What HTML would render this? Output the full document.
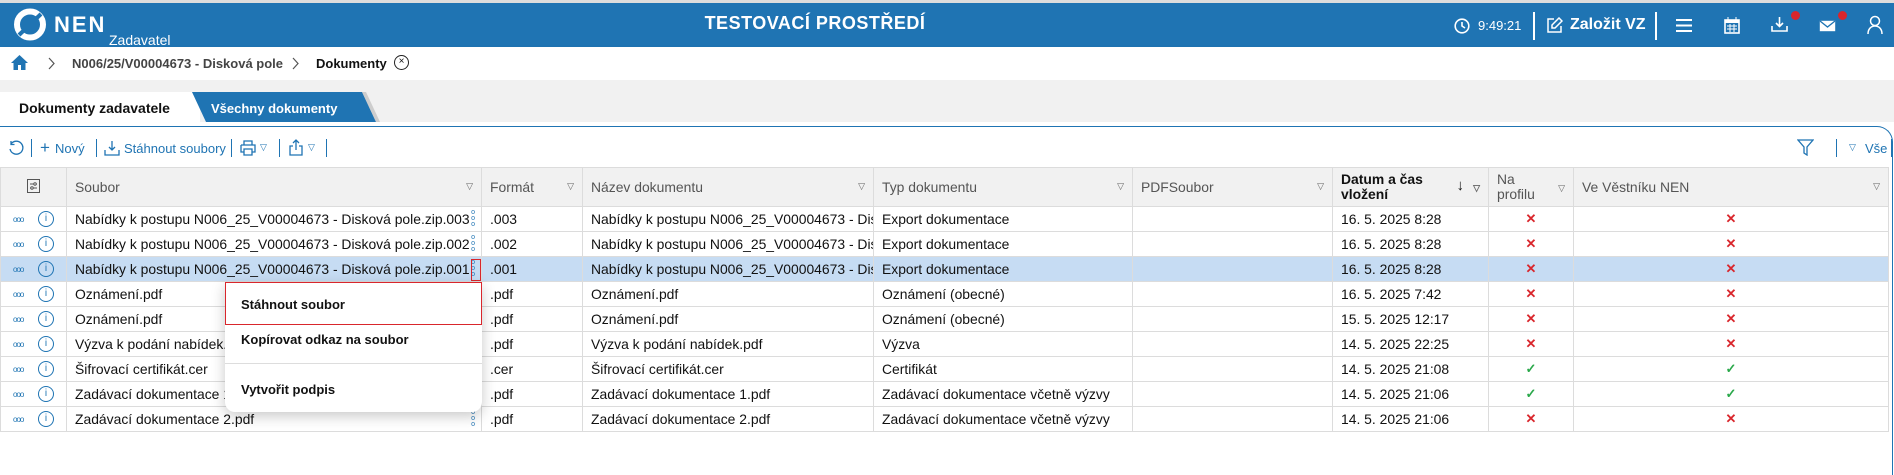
<!DOCTYPE html>
<html><head><meta charset="utf-8"><style>
*{box-sizing:border-box;margin:0;padding:0}
body{width:1894px;height:475px;overflow:hidden;background:#fff;font-family:"Liberation Sans",Arial,sans-serif;font-size:13px;color:#111;position:relative}
.a{position:absolute}
#top{left:0;top:0;width:1894px;height:3px;background:#ddd}
#hdr{left:0;top:3px;width:1894px;height:44px;background:#1f74b3;color:#fff}
#bc{left:0;top:47px;width:1894px;height:33px;background:#fff;box-shadow:0 3px 5px rgba(0,0,0,.12)}
#grey{left:0;top:80px;width:1894px;height:42px;background:#f1f1f1}
#panel{left:0;top:126px;width:1893px;height:349px;border-top:1.5px solid #1f74b3;border-right:1.5px solid #1f74b3;border-top-right-radius:16px;background:#fff}
table{position:absolute;left:0;top:167px;border-collapse:collapse;table-layout:fixed;width:1888px}
td,th{border:1px solid #dcdcdc;height:25px;padding:0 8px;white-space:nowrap;overflow:hidden;font-weight:normal;text-align:left;position:relative;font-size:13.9px}
th{height:39px;background:#f1f1f1;color:#555;vertical-align:middle}
th .f{position:absolute;right:8px;top:13px;font-size:9px;color:#666}
tr.sel td{background:#c6dcf3}
.x{color:#d9262c;font-weight:bold;text-align:center;font-size:13px}
.ok{color:#2aa84a;font-weight:bold;text-align:center;font-size:13px}
.blue{color:#1f74b3}
.sep{position:absolute;width:1px;height:18px;background:#1f74b3;top:139px}
.ic{position:absolute;left:12px;top:8px;color:#1f74b3;font-size:8px;letter-spacing:-1px}
.in{position:absolute;left:37px;top:4px;width:16px;height:16px;border:1.3px solid #1f74b3;border-radius:50%;color:#1f74b3;font-size:10px;line-height:13px;text-align:center}
.kb{position:absolute;right:6px;top:3px;color:#1f74b3;font-size:7px;line-height:6px}
</style></head><body>
<div class="a" id="top"></div>
<div class="a" id="hdr">
 <svg class="a" style="left:13px;top:5px" width="34" height="33" viewBox="0 0 34 33"><circle cx="17" cy="16.5" r="13" fill="none" stroke="#fff" stroke-width="6"/><path d="M6 27 L28 6" stroke="#1f74b3" stroke-width="4"/></svg>
 <div class="a" style="left:54px;top:9px;font-size:22px;font-weight:bold;letter-spacing:2px">NEN</div>
 <div class="a" style="left:109px;top:29px;font-size:14px">Zadavatel</div>
 <div class="a" style="left:0;width:1630px;text-align:center;top:10px;font-size:18px;font-weight:bold;letter-spacing:.5px">TESTOVACÍ PROSTŘEDÍ</div>
 <svg class="a" style="left:1454px;top:15px" width="16" height="16" viewBox="0 0 16 16" fill="none" stroke="#fff" stroke-width="1.6"><circle cx="8" cy="8" r="6.8"/><path d="M8 4v4l3 2"/></svg>
 <div class="a" style="left:1478px;top:15px;font-size:13px">9:49:21</div>
 <div class="a" style="left:1533px;top:9px;width:2px;height:28px;background:#fff"></div>
 <svg class="a" style="left:1546px;top:14px" width="17" height="17" viewBox="0 0 17 17" fill="none" stroke="#fff" stroke-width="1.5"><path d="M8 2H2v13h13V9"/><path d="M13 1l3 3-7 7H6V8z"/></svg>
 <div class="a" style="left:1570px;top:13px;font-size:16px;font-weight:bold">Založit VZ</div>
 <div class="a" style="left:1655px;top:9px;width:2px;height:28px;background:#fff"></div>
 <svg class="a" style="left:1676px;top:16px" width="16" height="13"><path d="M0 1h16M0 6.5h16M0 12h16" stroke="#fff" stroke-width="2"/></svg>
 <svg class="a" style="left:1724px;top:14px" width="16" height="17" viewBox="0 0 16 17"><rect x="1" y="3" width="14" height="13" fill="none" stroke="#fff" stroke-width="1.6"/><rect x="1" y="3" width="14" height="3" fill="#fff"/><path d="M4 0v4M12 0v4M3 9h10M3 12h10M6 7v8M10 7v8" stroke="#fff" stroke-width="1"/></svg>
 <svg class="a" style="left:1771px;top:13px" width="17" height="17" viewBox="0 0 17 17" fill="none" stroke="#fff" stroke-width="1.6"><path d="M8.5 1v9M5 7l3.5 3.5L12 7M1 10v5h15v-5"/></svg>
 <div class="a" style="left:1791px;top:8px;width:9px;height:9px;border-radius:50%;background:#d9262c"></div>
 <svg class="a" style="left:1819px;top:17px" width="17" height="12"><rect x=".8" y=".8" width="15.4" height="10.4" fill="#fff"/><path d="M1 1l7.5 6L16 1" stroke="#1f74b3" stroke-width="1.3" fill="none"/></svg>
 <div class="a" style="left:1838px;top:8px;width:9px;height:9px;border-radius:50%;background:#d9262c"></div>
 <svg class="a" style="left:1867px;top:12px" width="16" height="20" viewBox="0 0 16 20" fill="none" stroke="#fff" stroke-width="1.5"><circle cx="8" cy="6" r="4.5"/><path d="M1 19c0-5 3-8 7-8s7 3 7 8"/></svg>
</div>
<div class="a" id="bc">
 <svg class="a" style="left:11px;top:8px" width="17" height="15" viewBox="0 0 17 15"><path d="M8.5 0L0 8h2.5v7h4.5v-5h3v5h4.5V8H17z" fill="#1f74b3"/></svg>
 <svg class="a" style="left:48px;top:10px" width="8" height="13"><path d="M1 1l5 5.5L1 12" stroke="#555" fill="none" stroke-width="1.2"/></svg>
 <div class="a" style="left:72px;top:9px;font-weight:bold;color:#444;font-size:13px">N006/25/V00004673 - Disková pole</div>
 <svg class="a" style="left:292px;top:10px" width="8" height="13"><path d="M1 1l5 5.5L1 12" stroke="#555" fill="none" stroke-width="1.2"/></svg>
 <div class="a" style="left:316px;top:9px;font-weight:bold;font-size:13px">Dokumenty</div>
 <div class="a" style="left:394px;top:8px;width:15px;height:15px;border:1.3px solid #222;border-radius:50%;font-size:10px;line-height:12px;text-align:center">×</div>
</div>
<div class="a" id="grey"></div>
<div class="a" style="left:0;top:92px;width:200px;height:34px;background:#fff"></div>
<div class="a" style="left:19px;top:100px;font-weight:bold;font-size:14px">Dokumenty zadavatele</div>
<svg class="a" style="left:190px;top:92px" width="190" height="30"><polygon points="2,0 172,0 186,30 16,30" fill="#1f74b3"/><polygon points="172,0 176,0 190,30 186,30" fill="#aaa" opacity=".5"/></svg>
<div class="a" style="left:211px;top:101px;font-weight:bold;font-size:13px;color:#fff">Všechny dokumenty</div>
<div class="a" id="panel"></div>
<svg class="a" style="left:8px;top:140px" width="16" height="16" viewBox="0 0 16 16" fill="none" stroke="#1f74b3" stroke-width="1.3"><path d="M3 4A6.5 6.5 0 1 1 2 9"/><path d="M3 1v3.5h3.5"/></svg>
<div class="sep" style="left:31px"></div>
<div class="a blue" style="left:40px;top:139px;font-size:17px;line-height:17px">+</div>
<div class="a blue" style="left:55px;top:141px">Nový</div>
<div class="sep" style="left:96px"></div>
<svg class="a" style="left:104px;top:140px" width="16" height="16" viewBox="0 0 16 16" fill="none" stroke="#1f74b3" stroke-width="1.3"><path d="M8 1v9M5 7l3 3 3-3M1 10v5h14v-5"/></svg>
<div class="a blue" style="left:124px;top:141px">Stáhnout soubory</div>
<div class="sep" style="left:231px"></div>
<svg class="a" style="left:240px;top:140px" width="16" height="16" viewBox="0 0 16 16" fill="none" stroke="#1f74b3" stroke-width="1.3"><path d="M4 5V1h8v4M1 5h14v7h-3M4 12H1V5M4 9h8v6H4z"/></svg>
<div class="a blue" style="left:260px;top:142px;font-size:9px">▽</div>
<div class="sep" style="left:279px"></div>
<svg class="a" style="left:289px;top:139px" width="14" height="17" viewBox="0 0 14 17" fill="none" stroke="#1f74b3" stroke-width="1.3"><path d="M7 11V1M4 4l3-3 3 3M4 7H1v9h12V7h-3"/></svg>
<div class="a blue" style="left:308px;top:142px;font-size:9px">▽</div>
<div class="sep" style="left:326px"></div>
<svg class="a" style="left:1797px;top:139px" width="17" height="17" viewBox="0 0 17 17" fill="none" stroke="#1f74b3" stroke-width="1.3"><path d="M1 1h15l-6 7v8l-3-2V8z"/></svg>
<div class="sep" style="left:1836px"></div>
<div class="a blue" style="left:1849px;top:142px;font-size:9px">▽</div>
<div class="a blue" style="left:1865px;top:141px">Vše</div>
<div class="sep" style="left:1891px"></div>
<table>
<colgroup><col style="width:66px"><col style="width:415px"><col style="width:101px"><col style="width:291px"><col style="width:259px"><col style="width:200px"><col style="width:156px"><col style="width:85px"><col style="width:315px"></colgroup>
<tr><th style="padding:0;text-align:center"><svg width="13" height="14" viewBox="0 0 13 14" fill="none" stroke="#555" stroke-width="1"><rect x=".5" y=".5" width="12" height="13"/><path d="M3 5h7M3 9h7"/><circle cx="8" cy="5" r="1.2" fill="#fff"/><circle cx="5" cy="9" r="1.2" fill="#fff"/></svg></th>
<th>Soubor<span class="f">▽</span></th><th>Formát<span class="f">▽</span></th><th>Název dokumentu<span class="f">▽</span></th><th>Typ dokumentu<span class="f">▽</span></th><th>PDFSoubor<span class="f">▽</span></th>
<th style="color:#111;font-weight:bold;line-height:15px">Datum a čas<br>vložení<span class="f" style="right:24px;top:10px;font-size:15px;color:#111;font-weight:normal">↓</span><span class="f">▽</span></th>
<th style="line-height:15px">Na<br>profilu<span class="f">▽</span></th><th>Ve Věstníku NEN<span class="f">▽</span></th></tr>
<tr><td><span class="ic">ooo</span><span class="in">i</span></td><td>Nabídky k postupu N006_25_V00004673 - Disková pole.zip.003<span class="kb">o<br>o<br>o</span></td><td>.003</td><td>Nabídky k postupu N006_25_V00004673 - Dis...</td><td>Export dokumentace</td><td></td><td>16. 5. 2025 8:28</td><td class="x">✕</td><td class="x">✕</td></tr>
<tr><td><span class="ic">ooo</span><span class="in">i</span></td><td>Nabídky k postupu N006_25_V00004673 - Disková pole.zip.002<span class="kb">o<br>o<br>o</span></td><td>.002</td><td>Nabídky k postupu N006_25_V00004673 - Dis...</td><td>Export dokumentace</td><td></td><td>16. 5. 2025 8:28</td><td class="x">✕</td><td class="x">✕</td></tr>
<tr class="sel"><td><span class="ic">ooo</span><span class="in">i</span></td><td>Nabídky k postupu N006_25_V00004673 - Disková pole.zip.001<span class="kb">o<br>o<br>o</span></td><td>.001</td><td>Nabídky k postupu N006_25_V00004673 - Dis...</td><td>Export dokumentace</td><td></td><td>16. 5. 2025 8:28</td><td class="x">✕</td><td class="x">✕</td></tr>
<tr><td><span class="ic">ooo</span><span class="in">i</span></td><td>Oznámení.pdf</td><td>.pdf</td><td>Oznámení.pdf</td><td>Oznámení (obecné)</td><td></td><td>16. 5. 2025 7:42</td><td class="x">✕</td><td class="x">✕</td></tr>
<tr><td><span class="ic">ooo</span><span class="in">i</span></td><td>Oznámení.pdf</td><td>.pdf</td><td>Oznámení.pdf</td><td>Oznámení (obecné)</td><td></td><td>15. 5. 2025 12:17</td><td class="x">✕</td><td class="x">✕</td></tr>
<tr><td><span class="ic">ooo</span><span class="in">i</span></td><td>Výzva k podání nabídek.pdf</td><td>.pdf</td><td>Výzva k podání nabídek.pdf</td><td>Výzva</td><td></td><td>14. 5. 2025 22:25</td><td class="x">✕</td><td class="x">✕</td></tr>
<tr><td><span class="ic">ooo</span><span class="in">i</span></td><td>Šifrovací certifikát.cer</td><td>.cer</td><td>Šifrovací certifikát.cer</td><td>Certifikát</td><td></td><td>14. 5. 2025 21:08</td><td class="ok">✓</td><td class="ok">✓</td></tr>
<tr><td><span class="ic">ooo</span><span class="in">i</span></td><td>Zadávací dokumentace 1.pdf</td><td>.pdf</td><td>Zadávací dokumentace 1.pdf</td><td>Zadávací dokumentace včetně výzvy</td><td></td><td>14. 5. 2025 21:06</td><td class="ok">✓</td><td class="ok">✓</td></tr>
<tr><td><span class="ic">ooo</span><span class="in">i</span></td><td>Zadávací dokumentace 2.pdf<span class="kb">o<br>o<br>o</span></td><td>.pdf</td><td>Zadávací dokumentace 2.pdf</td><td>Zadávací dokumentace včetně výzvy</td><td></td><td>14. 5. 2025 21:06</td><td class="x">✕</td><td class="x">✕</td></tr>
</table>
<div class="a" style="left:471px;top:259px;width:10px;height:22px;border:1px solid #d9262c"></div>
<div class="a" style="left:225px;top:282px;width:257px;height:130px;background:#fff;border-radius:0 0 10px 10px;box-shadow:0 4px 14px rgba(0,0,0,.22)">
 <div class="a" style="left:0;top:0;width:257px;height:43px;border:1px solid #d9262c"></div>
 <div class="a" style="left:16px;top:15px;font-weight:bold">Stáhnout soubor</div>
 <div class="a" style="left:16px;top:50px;font-weight:bold">Kopírovat odkaz na soubor</div>
 <div class="a" style="left:0;top:81px;width:257px;height:1px;background:#ddd"></div>
 <div class="a" style="left:16px;top:100px;font-weight:bold">Vytvořit podpis</div>
</div>
</body></html>
